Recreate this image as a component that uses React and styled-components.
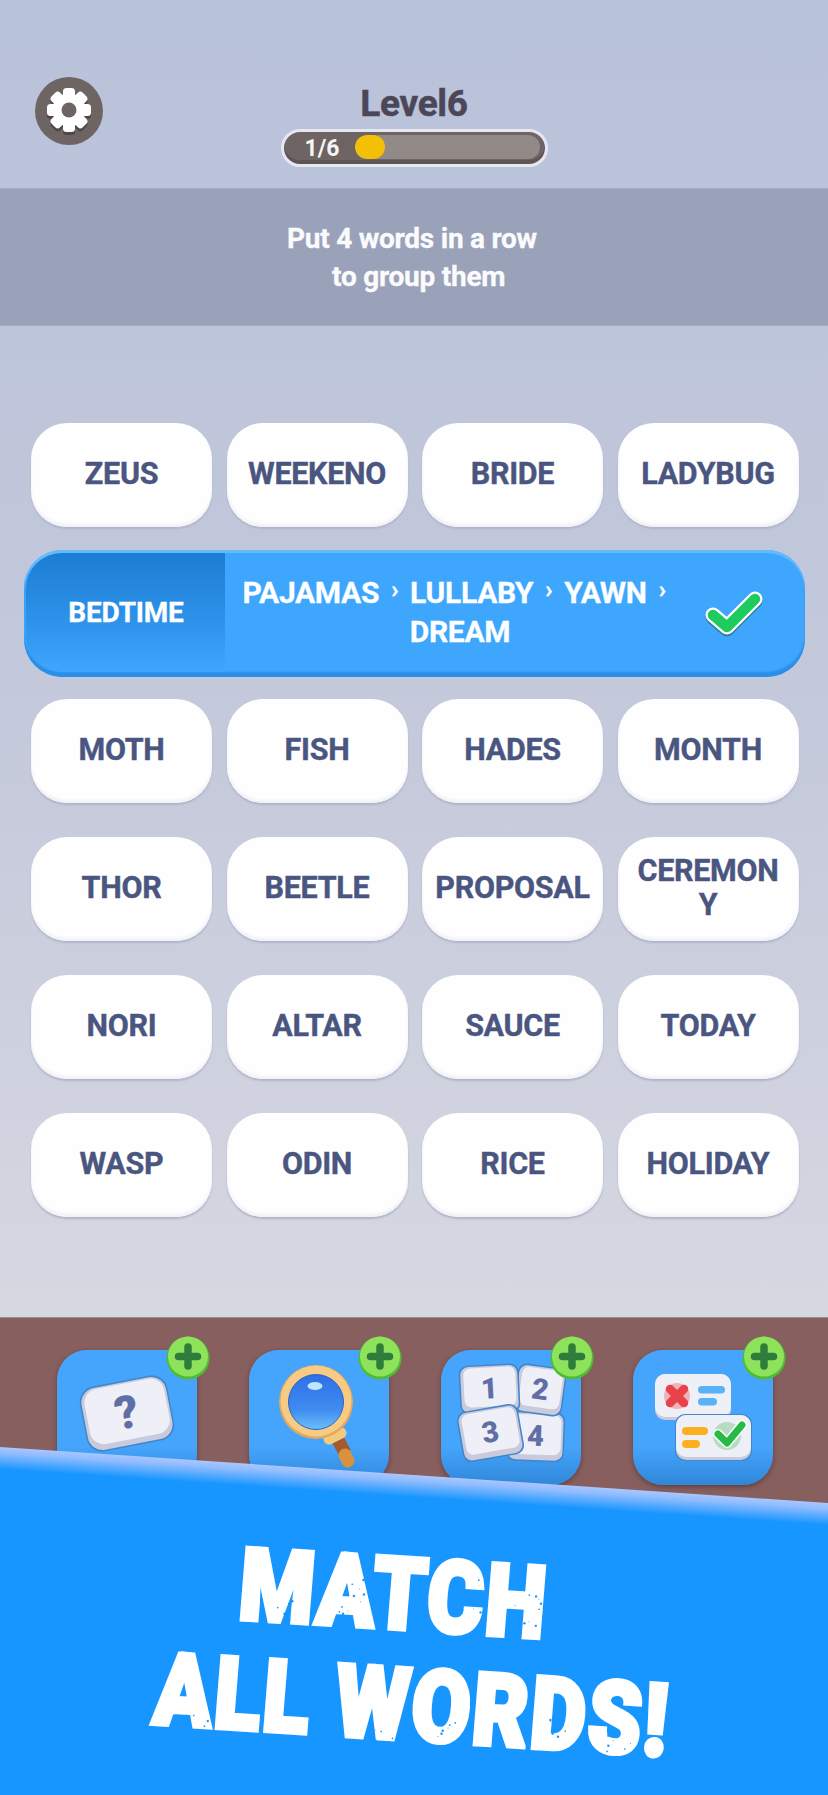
import React from 'react';
import styled, { createGlobalStyle } from 'styled-components';

const GlobalStyle = createGlobalStyle`
  html, body {
    margin: 0;
    padding: 0;
  }
  body {
    font-family: Roboto, "Liberation Sans", sans-serif;
  }
`;

const Page = styled.div`
  width: 828px;
  height: 1795px;
  display: flex;
  flex-direction: column;
  overflow: hidden;
  background: linear-gradient(180deg, #b8c2da 0%, #c4c9db 40%, #d6d7e1 73%);
`;

const TopBar = styled.header`
  height: 188px;
  flex: none;
  display: grid;
  grid-template-columns: 35px 68px 1fr 103px;
  padding-top: 77px;
  box-sizing: border-box;
  align-items: start;
`;

const SettingsButton = styled.div`
  grid-column: 2;
  width: 68px;
  height: 68px;
  border-radius: 50%;
  background: #6e6464;
  display: flex;
  align-items: center;
  justify-content: center;
`;

const LevelBox = styled.div`
  grid-column: 3;
  display: flex;
  flex-direction: column;
  align-items: center;
`;

const LevelTitle = styled.h1`
  margin: 0;
  height: 52px;
  font-size: 37px;
  line-height: 54px;
  font-weight: 700;
  color: #4b4759;
  letter-spacing: -0.3px;
  -webkit-text-stroke: 0.5px #4b4759;
`;

const ProgressOuter = styled.div`
  width: 267px;
  height: 38px;
  box-sizing: border-box;
  border: 3px solid #e6e7f1;
  border-radius: 19px;
  background: #6e6464;
  display: flex;
  align-items: center;
  padding: 0 5px 0 21px;
  box-shadow: inset 0 -4px 0 #5e5555;
`;

const ProgressLabel = styled.span`
  width: 50px;
  flex: none;
  font-size: 23px;
  font-weight: 700;
  color: #f7f5f3;
`;

const ProgressTrack = styled.div`
  flex: 1;
  height: 24px;
  margin-top: -2px;
  border-radius: 12px;
  background: #928a87;
  overflow: hidden;
`;

const ProgressFill = styled.div`
  height: 100%;
  border-radius: 12px;
  background: #f4c005;
`;

const HintBand = styled.div`
  height: 138px;
  flex: none;
  display: flex;
  align-items: center;
  justify-content: center;
  padding: 2px 4px 0 0;
  box-sizing: border-box;
  background: #9aa2b9;
  box-shadow: inset 0 1px 0 #a4adc6, inset 0 -1px 0 #a4adc6;
`;

const HintText = styled.p`
  margin: 0;
  white-space: pre-wrap;
  text-align: center;
  font-size: 28px;
  line-height: 38px;
  font-weight: 700;
  color: #fbfbfd;
  letter-spacing: -0.25px;
  -webkit-text-stroke: 0.3px #fbfbfd;
`;

const Board = styled.main`
  flex: none;
  display: flex;
  flex-direction: column;
  padding-top: 97px;
  height: 991px;
  box-sizing: border-box;
`;

const WordRow = styled.div`
  display: grid;
  grid-template-columns: repeat(4, 181px);
  column-gap: 14.5px;
  padding-left: 31px;
  margin-bottom: ${p => p.$gap}px;
`;

const WordTile = styled.div`
  height: 104px;
  border-radius: 36px;
  background: #fefeff;
  box-shadow: 0 2px 2px #b0b4c8, inset 0 -3px 3px #f1f1f7;
  display: flex;
  align-items: center;
  justify-content: center;
  white-space: pre-line;
  text-align: center;
  font-size: 30.5px;
  line-height: 34px;
  font-weight: 700;
  color: #4a5680;
  letter-spacing: -0.3px;
  -webkit-text-stroke: 0.4px #4a5680;
  padding-bottom: 3px;
  box-sizing: border-box;
`;

const SolvedBar = styled.div`
  height: 127px;
  margin: 0 23px 22px 24px;
  flex: none;
  display: flex;
  border-radius: 38px;
  overflow: hidden;
  background: #3fa6fd;
  box-shadow: inset 0 3px 0 #62bbfb, inset 0 -5px 2px #2a8fe8;
`;

const SolvedCategory = styled.div`
  width: 199px;
  flex: none;
  margin: 3px 0 5px 2px;
  border-radius: 36px 0 0 36px;
  display: flex;
  align-items: center;
  justify-content: center;
  padding-left: 1px;
  box-sizing: border-box;
  font-size: 28px;
  font-weight: 700;
  color: #fdfeff;
  letter-spacing: -0.2px;
  -webkit-text-stroke: 0.3px #fdfeff;
  background: linear-gradient(180deg, #1b7dd1 0%, #2f93ec 60%, #3fa6fd 100%);
`;

const SolvedWords = styled.div`
  width: 470px;
  flex: none;
  padding-bottom: 3px;
  box-sizing: border-box;
  align-self: center;
  text-align: center;
  font-size: 30px;
  line-height: 39px;
  font-weight: 700;
  color: #fdfeff;
  letter-spacing: -0.3px;
  -webkit-text-stroke: 0.3px #fdfeff;
`;

const Arrow = styled.span`
  display: inline-block;
  margin: 0 12px;
  font-size: 24px;
  line-height: 1;
  position: relative;
  top: -5px;
`;

const SolvedCheck = styled.svg`
  width: 58px;
  height: 46px;
  margin: 41px 0 0 10px;
  flex: none;
`;

const Footer = styled.footer`
  flex: 1;
  position: relative;
  background: #875f5e;
  box-shadow: inset 0 1px 0 #9a8a8c;
`;

const PowerRow = styled.div`
  display: grid;
  grid-template-columns: repeat(4, 140px);
  column-gap: 52px;
  padding: 33px 0 0 57px;
`;

const PowerTile = styled.div`
  position: relative;
  height: 135px;
  border-radius: 30px;
  background: linear-gradient(180deg, #45a4fb 0%, #45a4fb 72%, #2f87d9 100%);
  box-shadow: 0 2px 5px rgba(70, 35, 35, 0.55);
`;

const PowerIcon = styled.svg`
  display: block;
  width: 140px;
  height: 135px;
`;

const PlusBadge = styled.svg`
  position: absolute;
  top: -14px;
  right: -13px;
  width: 44px;
  height: 44px;
`;

const Promo = styled.section`
  position: absolute;
  left: 0;
  right: 0;
  top: 130px;
  bottom: 0;
  clip-path: polygon(0 0, 100% 56px, 100% 100%, 0 100%);
  background: linear-gradient(183.87deg, #a9c6ff 56px, #8fbcff 62px, #1796ff 78px);
  display: flex;
  flex-direction: column;
  align-items: center;
  padding-top: 94px;
  box-sizing: border-box;
`;

const Slogan = styled.div`
  position: relative;
  text-align: center;
  font-family: Roboto, "Liberation Sans", sans-serif;
  font-weight: 900;
  font-size: 100px;
  line-height: 110px;
  color: #fff;
  -webkit-text-stroke: 5px #fff;
  letter-spacing: 3px;
  transform: translateX(3px) rotate(3.6deg) skewX(-1deg) scaleX(0.85);
`;

const SloganLine = styled.div`
  white-space: pre;
  padding-right: ${p => p.$inset}px;
`;

const Specks = styled.svg`
  position: absolute;
  inset: 0;
  width: 828px;
  height: 348px;
`;

const words = [
  ['ZEUS', 'WEEKENO', 'BRIDE', 'LADYBUG'],
  null,
  ['MOTH', 'FISH', 'HADES', 'MONTH'],
  ['THOR', 'BEETLE', 'PROPOSAL', 'CEREMON\nY'],
  ['NORI', 'ALTAR', 'SAUCE', 'TODAY'],
  ['WASP', 'ODIN', 'RICE', 'HOLIDAY'],
];

// worn print spots on the slogan, in promo panel coordinates
const speckClusters = [
  [280, 171], [352, 150], [475, 150], [528, 165], [195, 285],
  [385, 300], [450, 287], [563, 290], [620, 305],
];

const specks = speckClusters.flatMap(([cx, cy], c) =>
  Array.from({ length: 12 }, (_, i) => ({
    x: cx + Math.sin(c * 7 + i * 2.4) * 13,
    y: cy + Math.cos(c * 5 + i * 3.7) * 17,
    r: 0.5 + (i % 3) * 0.35,
  }))
);

const Gear = () => (
  <svg width="50" height="50" viewBox="0 0 50 50">
    {[['#4f4848', 3], ['#fff', 0]].map(([color, dy]) => (
      <g key={color} transform={`translate(0 ${dy})`} fill={color}>
        {[0, 45, 90, 135].map(a => (
          <rect key={a} x="19" y="2" width="12" height="44" rx="3.5" transform={`rotate(${a} 25 24)`} />
        ))}
        <circle cx="25" cy="24" r="16.5" />
      </g>
    ))}
    <circle cx="25" cy="24" r="7.5" fill="#6e6464" />
  </svg>
);

const Plus = () => (
  <PlusBadge viewBox="0 0 44 44">
    <circle cx="22" cy="22" r="21.5" fill="#4fbd30" />
    <circle cx="22" cy="20.5" r="20" fill="#8fe25c" />
    <path d="M22 11v19M12.5 20.5h19" stroke="#2f7d3c" strokeWidth="7.5" strokeLinecap="round" />
  </PlusBadge>
);

const MiniCard = ({ x, y, w, h, rot, label, size = 28, radius = 8 }) => (
  <g transform={`rotate(${rot} ${x + w / 2} ${y + h / 2})`}>
    <rect x={x - 1.5} y={y - 1.5} width={w + 3} height={h + 3} rx={radius + 1} fill="#3f86cc" />
    <rect x={x} y={y} width={w} height={h} rx={radius} fill="#c9cadb" />
    <rect x={x + 3} y={y + 1.5} width={w - 5} height={h - 7} rx={radius - 1} fill="#eff0f7" />
    <text
      x={x + w / 2}
      y={y + h / 2 + size * 0.32}
      textAnchor="middle"
      fontFamily="Roboto, sans-serif"
      fontWeight="900"
      fontSize={size}
      fill="#5f6ea6"
    >
      {label}
    </text>
  </g>
);

const QuestionIcon = () => (
  <PowerIcon viewBox="0 0 140 135">
    <MiniCard x={27} y={32} w={86} h={63} rot={-11} label="?" size={46} radius={15} />
  </PowerIcon>
);

const GlassIcon = () => (
  <PowerIcon viewBox="0 0 140 135">
    <defs>
      <linearGradient id="lens" x1="0" y1="0" x2="0" y2="1">
        <stop offset="0" stopColor="#2f6fe6" />
        <stop offset="0.65" stopColor="#3f8df0" />
        <stop offset="1" stopColor="#6cc0fa" />
      </linearGradient>
    </defs>
    <path d="M88 88l8 15" stroke="#a35a2c" strokeWidth="13" />
    <path d="M96 105l3 6" stroke="#d6923f" strokeWidth="13" strokeLinecap="round" />
    <path d="M80 89l12-6" stroke="#f2cb82" strokeWidth="11" strokeLinecap="round" />
    <circle cx="67" cy="52" r="37" fill="#e3a95c" />
    <circle cx="67" cy="51" r="35.5" fill="#f8cb85" />
    <circle cx="67" cy="52" r="27.5" fill="url(#lens)" stroke="#2b64c8" strokeWidth="1" />
    <ellipse cx="66" cy="36" rx="7.5" ry="4" fill="#bfe6ff" />
  </PowerIcon>
);

const NumbersIcon = () => (
  <PowerIcon viewBox="0 0 140 135">
    <MiniCard x={67} y={63} w={55} h={47} rot={2} label="4" size={29} />
    <MiniCard x={76} y={17} w={46} h={46} rot={8} label="2" size={29} />
    <MiniCard x={20} y={16} w={57} h={46} rot={-3} label="1" size={29} />
    <MiniCard x={20} y={59} w={59} h={48} rot={-10} label="3" size={29} />
  </PowerIcon>
);

const AnswerIcon = () => (
  <PowerIcon viewBox="0 0 140 135">
    <rect x="22" y="24" width="76" height="46" rx="10" fill="#c9cadb" />
    <rect x="22" y="24" width="76" height="43" rx="10" fill="#eff0f7" />
    <circle cx="44" cy="46" r="13" fill="#eeb4b8" />
    <path d="M37 39l14 14M51 39L37 53" stroke="#e8424a" strokeWidth="8.5" strokeLinecap="round" />
    <rect x="65" y="36" width="27" height="7.5" rx="3.75" fill="#58b2f5" />
    <rect x="65" y="48" width="19" height="7.5" rx="3.75" fill="#58b2f5" />
    <rect x="42" y="64" width="77" height="47" rx="10" fill="#3f86cc" />
    <rect x="43" y="65" width="75" height="45" rx="10" fill="#c9cadb" />
    <rect x="43" y="65" width="75" height="42" rx="10" fill="#eff0f7" />
    <rect x="49" y="77" width="26" height="8" rx="4" fill="#fdb01f" />
    <rect x="49" y="90" width="18" height="8" rx="4" fill="#fdb01f" />
    <circle cx="94" cy="86" r="14" fill="#b7dcc2" />
    <path d="M85 84l9 9 15-18" fill="none" stroke="#fff" strokeWidth="10" strokeLinecap="round" strokeLinejoin="round" />
    <path d="M85 84l9 9 15-18" fill="none" stroke="#27bb45" strokeWidth="7" strokeLinecap="round" strokeLinejoin="round" />
  </PowerIcon>
);

const CHECK_PATH = 'M8 24l14 12L50 8';

const App = () => (
  <Page>
    <GlobalStyle />
    <TopBar>
      <SettingsButton>
        <Gear />
      </SettingsButton>
      <LevelBox>
        <LevelTitle>Level6</LevelTitle>
        <ProgressOuter>
          <ProgressLabel>1/6</ProgressLabel>
          <ProgressTrack>
            <ProgressFill style={{ width: `${(1 / 6) * 100}%` }} />
          </ProgressTrack>
        </ProgressOuter>
      </LevelBox>
    </TopBar>
    <HintBand>
      <HintText>{'Put 4 words in a row\n  to group them'}</HintText>
    </HintBand>
    <Board>
      {words.map((row, i) =>
        row ? (
          <WordRow key={i} $gap={i === 0 ? 23 : 34}>
            {row.map(word => (
              <WordTile key={word}>{word}</WordTile>
            ))}
          </WordRow>
        ) : (
          <SolvedBar key={i}>
            <SolvedCategory>BEDTIME</SolvedCategory>
            <SolvedWords>
              PAJAMAS<Arrow>›</Arrow>LULLABY<Arrow>›</Arrow>YAWN<Arrow>›</Arrow> DREAM
            </SolvedWords>
            <SolvedCheck viewBox="0 0 58 46">
              <path d={CHECK_PATH} fill="none" stroke="#2a7f9c" strokeWidth="15" strokeLinecap="round" strokeLinejoin="round" transform="translate(0 2)" />
              <path d={CHECK_PATH} fill="none" stroke="#fff" strokeWidth="15" strokeLinecap="round" strokeLinejoin="round" />
              <path d={CHECK_PATH} fill="none" stroke="#1fcb5c" strokeWidth="10.5" strokeLinecap="round" strokeLinejoin="round" />
            </SolvedCheck>
          </SolvedBar>
        )
      )}
    </Board>
    <Footer>
      <PowerRow>
        <PowerTile><QuestionIcon /><Plus /></PowerTile>
        <PowerTile><GlassIcon /><Plus /></PowerTile>
        <PowerTile><NumbersIcon /><Plus /></PowerTile>
        <PowerTile><AnswerIcon /><Plus /></PowerTile>
      </PowerRow>
      <Promo>
        <Slogan>
          <SloganLine $inset={64}>MATCH</SloganLine>
          <SloganLine $inset={0}>ALL WORDS!</SloganLine>
        </Slogan>
        <Specks viewBox="0 0 828 348">
          {specks.map((s, i) => (
            <circle key={i} cx={s.x} cy={s.y} r={s.r} fill="#1796ff" />
          ))}
        </Specks>
      </Promo>
    </Footer>
  </Page>
);

export default App;
